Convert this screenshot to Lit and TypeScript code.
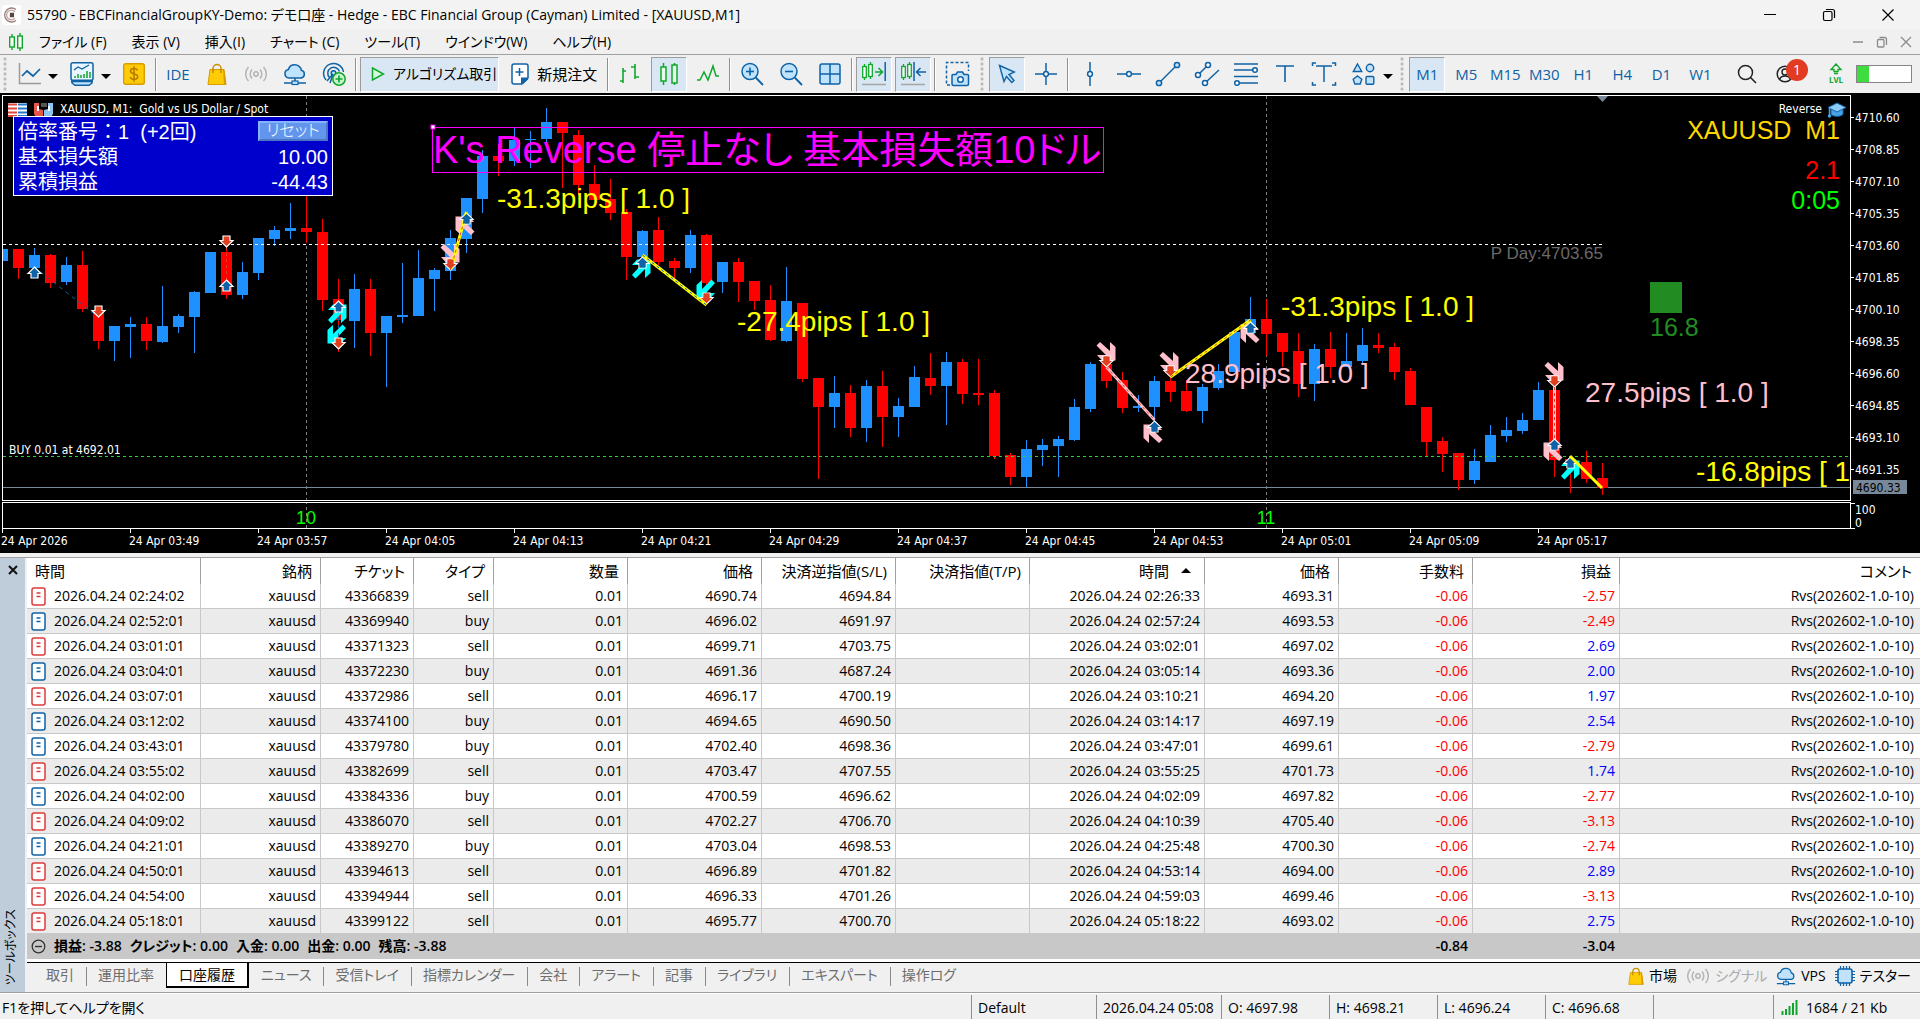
import { LitElement, html, svg, css, nothing } from "lit";
import { customElement } from "lit/decorators.js";
import { classMap } from "lit/directives/class-map.js";

const BLUE = "#0f62a5";
const PALE = "#bfe3fc";
const GREEN = "#0fa82c";

const icon = (w: number, h: number, body: unknown) =>
  html`<svg class="icon" width=${w} height=${h} viewBox="0 0 ${w} ${h}" fill="none" aria-hidden="true">${body}</svg>`;

const bag = (w: number, h: number) => html`<svg class="icon" width=${w} height=${h} viewBox="0 0 20 22" fill="none" aria-hidden="true">
  <path d="M6 9V5.500a4 4 0 0 1 8 0V9" stroke="#c98f00" stroke-width="1.500"/><path d="M3 6.500h14l2 15H1z" fill="#ffcb05" stroke="#d89b00"/><path d="M16 6.500h1.200l2 15H17z" fill="#d89b00"/><path d="M6 10V6M14 10V6" stroke="#b98200" stroke-width="1.300"/></svg>`;
const signal = html`<svg class="icon" width="24" height="20" viewBox="0 0 24 20" fill="none" stroke="#b4b4b4" stroke-width="1.500" aria-hidden="true">
  <circle cx="12" cy="10" r="2.200"/><path d="M8 5.500a6.500 6.500 0 0 0 0 9M16 5.500a6.500 6.500 0 0 1 0 9M4.500 3a10 10 0 0 0 0 14M19.500 3a10 10 0 0 1 0 14"/></svg>`;
const cloud = (s: number) => html`<svg class="icon" width=${s} height=${s} viewBox="0 0 24 24" fill="none" aria-hidden="true">
  <path d="M6 16a4.300 4.300 0 0 1-.6-8.500C6.200 4.500 8.700 2.700 11.700 2.700c3.400 0 6.300 2.400 6.700 5.600A4 4 0 0 1 18.500 16z" fill=${PALE} stroke=${BLUE} stroke-width="1.500"/><path d="M12 16v3M1 21h8M15 21h8" stroke=${BLUE} stroke-width="1.500"/><rect x="9" y="19" width="6" height="3.500" fill=${PALE} stroke=${BLUE} stroke-width="1.200"/></svg>`;

const lens = (plus: boolean) => icon(24, 24, svg`<circle cx="10" cy="9.500" r="8" fill=${PALE} stroke=${BLUE} stroke-width="1.500"/><path d="M15.700 15.500 23 23" stroke=${BLUE} stroke-width="1.800"/><path d="M6 9.500h8" stroke=${BLUE} stroke-width="1.600"/>${plus ? svg`<path d="M10 5.500v8" stroke=${BLUE} stroke-width="1.600"/>` : nothing}`);

const miniCandles = svg`<g stroke=${GREEN} stroke-width="1.300" fill="#fff"><path d="M3.500 2v16M9.500 0v17"/><rect x="1.700" y="4.500" width="3.600" height="11"/><rect x="7.700" y="2.500" width="3.600" height="12"/></g>`;

const ICONS: Record<string, unknown> = {
  lineChart: icon(24, 24, svg`<path d="M2.500 1v20.500H24" stroke="#9a9a9a" stroke-width="1.500"/><path d="M5 14l5-5 6 5 7-7" stroke=${BLUE} stroke-width="1.700"/>`),
  template: icon(24, 24, svg`<path d="M2 16v5l3 2.300h14l3-2.300v-5" fill=${PALE} stroke=${BLUE} stroke-width="1.500"/><rect x="1" y=".8" width="22" height="17.500" rx="2" fill="#eaf6ff" stroke=${BLUE} stroke-width="1.500"/><path d="M1 19.500h22" stroke=${BLUE} stroke-width="1.500"/><path d="M4 8l4-3 4 2 7-4" stroke=${BLUE} stroke-width="1.300"/><path d="M5 16v-2M8 16v-4M11 16v-3M14 16v-4M17 16v-7M20 16v-6" stroke=${GREEN} stroke-width="1.500"/>`),
  dollar: icon(22, 22, svg`<rect x=".7" y=".7" width="20.600" height="20.600" rx="2" fill="#ffcb05" stroke="#d89b00" stroke-width="1.400"/><path d="M14.500 7.500C14 6 12.800 5.500 11 5.500c-2 0-3.500.9-3.500 2.600 0 3.800 7.200 1.800 7.200 5.500 0 1.800-1.500 2.800-3.700 2.800-2 0-3.400-.8-3.800-2.500M11 3.300v15.400" stroke="#b57b00" stroke-width="1.500"/>`),
  bag: bag(20, 22),
  signal,
  cloud: cloud(24),
  globe: icon(24, 24, svg`<g stroke=${BLUE} stroke-width="1.500"><path d="M4 18A10 10 0 1 1 21.500 10"/><path d="M7.500 15.500A6 6 0 1 1 17.500 9.500" /><circle cx="11.500" cy="11" r="2.300" fill=${PALE}/><path d="M5 19l6-7M8 21l3-8"/></g><circle cx="17" cy="17" r="6.200" fill="#c9f3cf" stroke=${GREEN} stroke-width="1.500"/><path d="M17 13.500v7M13.500 17h7" stroke=${GREEN} stroke-width="1.700"/>`),
  play: icon(14, 14, svg`<path d="M1.500 1 12.500 7 1.500 13z" fill="#d8f7dc" stroke=${GREEN} stroke-width="1.500"/>`),
  order: icon(18, 22, svg`<path d="M3 1h12a2 2 0 0 1 2 2v12l-6 6H3a2 2 0 0 1-2-2V3a2 2 0 0 1 2-2z" fill="#fff" stroke=${BLUE} stroke-width="1.500"/><path d="M17 14.500v2L12 21h-2v-6.500z" fill=${BLUE}/><path d="M8.500 5v8M4.500 9h8" stroke=${BLUE} stroke-width="1.500"/>`),
  bars: icon(24, 24, svg`<path d="M5 6v15M5 9h3M2 19h3M17 2v15M17 15h4M13 5h4" stroke=${GREEN} stroke-width="1.600"/>`),
  candles: icon(20, 24, svg`<path d="M4.500 1v22M15.500 1v22" stroke=${GREEN} stroke-width="1.500"/><rect x="2" y="5" width="5" height="14" fill="#e8fbe9" stroke=${GREEN} stroke-width="1.500"/><rect x="13" y="3" width="5" height="18" fill="#e8fbe9" stroke=${GREEN} stroke-width="1.500"/>`),
  line: icon(24, 20, svg`<path d="M1 16h3l4-8 4 8 5-14 3 10h3" stroke=${GREEN} stroke-width="1.500"/>`),
  zoomIn: lens(true),
  zoomOut: lens(false),
  tiles: icon(22, 22, svg`<rect x="1" y="1" width="20" height="20" rx="2" fill=${PALE} stroke=${BLUE} stroke-width="1.500"/><path d="M11 1v20M1 11h20" stroke=${BLUE} stroke-width="1.500"/>`),
  shift: icon(26, 24, svg`${miniCandles}<path d="M14 10h7M17.500 6l4 4-4 4" stroke=${GREEN} stroke-width="1.500"/><path d="M24.200 0v19" stroke=${BLUE} stroke-width="1.500"/><path d="M1 22.500h24" stroke="#a5a5a5" stroke-width="1.500"/>`),
  scroll: icon(26, 24, svg`${miniCandles}<path d="M14 0v19M17 10h9M20.500 6l-4 4 4 4" stroke=${BLUE} stroke-width="1.500"/><path d="M1 22.500h24" stroke="#a5a5a5" stroke-width="1.500"/>`),
  camera: icon(26, 26, svg`<path d="M6 24H2.500V1.500h22V10" stroke=${BLUE} stroke-width="1.500" stroke-dasharray="3 2"/><path d="M9 13.500h3l1.500-2.500h5l1.500 2.500h3.500a1 1 0 0 1 1 1V23a1.500 1.500 0 0 1-1.500 1.500H9.500A1.500 1.500 0 0 1 8 23v-8.500a1 1 0 0 1 1-1z" fill=${PALE} stroke=${BLUE} stroke-width="1.500"/><circle cx="16.500" cy="18.500" r="2.800" fill="#fff" stroke=${BLUE} stroke-width="1.500"/>`),
  cursor: icon(18, 20, svg`<path d="M1.500 1.500 16.500 8l-5.500 2.500 5 6-2.200 2-5.300-6L6 17.500z" fill=${PALE} stroke=${BLUE} stroke-width="1.400"/>`),
  cross: icon(24, 24, svg`<g stroke=${BLUE} stroke-width="1.500"><path d="M12 1v22M1 12h22"/><circle cx="12" cy="12" r="2.400" fill="#fff"/></g>`),
  vline: icon(24, 24, svg`<g stroke=${BLUE} stroke-width="1.500"><path d="M12 0v24"/><circle cx="12" cy="12" r="2.400" fill="#fff"/></g>`),
  hline: icon(24, 24, svg`<g stroke=${BLUE} stroke-width="1.500"><path d="M0 12h24"/><circle cx="12" cy="12" r="2.400" fill="#fff"/></g>`),
  trend: icon(26, 26, svg`<g stroke=${BLUE} stroke-width="1.500"><path d="M4 22 22 4"/><circle cx="4" cy="22" r="2.600" fill=${PALE}/><circle cx="22" cy="4" r="2.600" fill=${PALE}/></g>`),
  channel: icon(26, 26, svg`<g stroke=${BLUE} stroke-width="1.500"><path d="M4 14 14 4M11 22 25 9"/><circle cx="4" cy="14" r="2.500" fill="#fff"/><circle cx="14" cy="4" r="2.500" fill="#fff"/><circle cx="11" cy="22" r="2.500" fill="#fff"/></g>`),
  fib: icon(26, 26, svg`<g stroke=${BLUE} stroke-width="1.500"><path d="M1 3h24M1 9h20M1 15.500h24M4 22h21"/><circle cx="22" cy="9" r="2.300" fill="#fff"/><circle cx="4" cy="22" r="2.300" fill="#fff"/></g>`),
  text: icon(24, 24, svg`<path d="M3 4h18M12 4v16" stroke=${BLUE} stroke-width="1.600"/>`),
  label: icon(26, 26, svg`<path d="M5 5h16M13 5v16M1.500 5V2H5M21 2h3.500v3M24.500 21v3H21M5 24H1.500v-3" stroke=${BLUE} stroke-width="1.500"/>`),
  shapes: icon(24, 24, svg`<g stroke=${BLUE} stroke-width="1.400" fill=${PALE}><path d="M5.500 2 9.700 9.500H1.300z"/><circle cx="18" cy="6" r="3.700"/><path d="M5.500 14l4.300 3.300L8.200 22H2.800l-1.600-4.700z"/><rect x="14" y="14.500" width="7.800" height="7.800" rx="1"/></g>`),
  search: icon(20, 20, svg`<circle cx="8.500" cy="8.500" r="7" stroke="#222" stroke-width="1.500"/><path d="M13.500 13.500 19 19" stroke="#222" stroke-width="1.600"/>`),
  account: icon(18, 18, svg`<circle cx="9" cy="9" r="7.800" stroke="#222" stroke-width="1.500"/><circle cx="9" cy="7" r="3" stroke="#222" stroke-width="1.400"/><path d="M3.500 14.500c1-3 3-3.500 5.500-3.500s4.500.5 5.500 3.500" stroke="#222" stroke-width="1.400"/>`),
};

interface Tool { icon?: string; text?: string; label?: string; on?: boolean; drop?: boolean; kind?: "sep" | "grip"; }
const SEP: Tool = { kind: "sep" };
const GRIP: Tool = { kind: "grip" };
const TOOLS: Tool[] = [
  { icon: "lineChart", label: "チャートタイプ", drop: true }, { icon: "template", label: "テンプレート", drop: true }, { icon: "dollar", label: "銘柄" }, SEP,
  { text: "IDE" }, { icon: "bag", label: "市場" }, { icon: "signal", label: "シグナル" }, { icon: "cloud", label: "VPS" }, { icon: "globe", label: "コミュニティ" }, SEP,
  { icon: "play", text: "アルゴリズム取引", on: true }, { icon: "order", text: "新規注文" }, SEP,
  { icon: "bars", label: "バーチャート" }, { icon: "candles", label: "ローソク足", on: true }, { icon: "line", label: "ラインチャート" }, SEP,
  { icon: "zoomIn", label: "ズームイン" }, { icon: "zoomOut", label: "ズームアウト" }, { icon: "tiles", label: "タイル表示" }, SEP,
  { icon: "shift", label: "チャートシフト", on: true }, { icon: "scroll", label: "自動スクロール", on: true }, SEP,
  { icon: "camera", label: "スクリーンショット" }, GRIP,
  { icon: "cursor", label: "カーソル", on: true }, { icon: "cross", label: "クロスヘア" }, SEP,
  { icon: "vline", label: "垂直線" }, { icon: "hline", label: "水平線" }, { icon: "trend", label: "トレンドライン" }, { icon: "channel", label: "チャネル" },
  { icon: "fib", label: "フィボナッチ" }, { icon: "text", label: "テキスト" }, { icon: "label", label: "ラベル" }, { icon: "shapes", label: "オブジェクト", drop: true }, GRIP,
  ...["M1", "M5", "M15", "M30", "H1", "H4", "D1", "W1"].map((t, i) => ({ text: t, on: i === 0 })),
];

// One entry per minute: direction, high, body top, body bottom, low (vertical canvas positions).
type Candle = [string, number, number, number, number];
const CANDLES: Candle[] = [
  ["B", 249, 249, 261, 261], ["R", 249, 249, 268, 279], ["B", 248, 255, 268, 268], ["R", 254, 255, 283, 288], ["B", 257, 265, 282, 285],
  ["R", 251, 265, 309, 312], ["R", 311, 311, 341, 349], ["B", 326, 326, 341, 361], ["B", 317, 324, 327, 358], ["R", 317, 324, 341, 350],
  ["B", 286, 326, 342, 343], ["B", 314, 316, 327, 333], ["B", 291, 292, 317, 353], ["B", 252, 252, 293, 293], ["R", 246, 252, 295, 299],
  ["B", 262, 272, 295, 299], ["B", 238, 238, 273, 280], ["B", 226, 230, 239, 246], ["B", 203, 228, 231, 239], ["R", 180, 228, 232, 243],
  ["R", 219, 232, 300, 311], ["R", 279, 299, 320, 352], ["B", 274, 289, 321, 348], ["R", 279, 289, 333, 356], ["B", 316, 316, 333, 387],
  ["B", 263, 315, 317, 323], ["B", 250, 278, 316, 316], ["B", 268, 270, 279, 311], ["B", 230, 238, 271, 280], ["B", 198, 198, 239, 253],
  ["B", 150, 156, 199, 213], ["R", 144, 156, 161, 176], ["B", 128, 140, 161, 166], ["B", 131, 139, 140, 168], ["B", 108, 122, 139, 145],
  ["R", 122, 122, 133, 188], ["R", 130, 135, 185, 195], ["R", 165, 184, 200, 200], ["R", 179, 199, 213, 220], ["R", 209, 212, 257, 280],
  ["B", 230, 231, 257, 257], ["R", 217, 230, 262, 265], ["R", 258, 261, 268, 279], ["B", 230, 235, 268, 273], ["R", 234, 235, 283, 290],
  ["B", 262, 262, 282, 293], ["R", 258, 262, 282, 302], ["R", 281, 281, 301, 310], ["R", 285, 300, 340, 341], ["B", 267, 301, 341, 342],
  ["R", 303, 303, 379, 382], ["R", 378, 378, 407, 479], ["B", 376, 393, 407, 428], ["R", 385, 393, 428, 437], ["B", 380, 386, 428, 442],
  ["R", 371, 386, 417, 447], ["B", 398, 406, 417, 437], ["B", 366, 377, 407, 407], ["R", 353, 378, 386, 395], ["B", 352, 362, 386, 425],
  ["R", 359, 362, 394, 404], ["R", 359, 393, 395, 405], ["R", 390, 393, 456, 459], ["R", 453, 455, 477, 485], ["B", 440, 449, 477, 487],
  ["B", 439, 445, 450, 466], ["B", 436, 439, 446, 477], ["B", 399, 407, 440, 441], ["B", 362, 364, 409, 412], ["R", 364, 364, 381, 388],
  ["R", 372, 380, 408, 413], ["B", 395, 406, 408, 412], ["B", 376, 381, 407, 425], ["R", 377, 381, 392, 402], ["R", 380, 391, 411, 412],
  ["B", 384, 387, 411, 423], ["B", 364, 371, 388, 390], ["B", 332, 332, 372, 372], ["B", 297, 319, 333, 333], ["R", 299, 319, 334, 356],
  ["R", 333, 333, 352, 367], ["R", 333, 351, 384, 397], ["B", 344, 349, 384, 401], ["R", 332, 349, 367, 378], ["B", 333, 361, 367, 367],
  ["B", 328, 345, 361, 365], ["R", 333, 345, 348, 353], ["R", 343, 347, 372, 380], ["R", 368, 371, 405, 405], ["R", 407, 407, 442, 456],
  ["R", 437, 441, 454, 472], ["R", 453, 453, 480, 490], ["B", 449, 461, 480, 484], ["B", 425, 435, 462, 462], ["B", 417, 430, 436, 442],
  ["B", 413, 420, 431, 434], ["B", 382, 390, 420, 420], ["R", 387, 390, 460, 477], ["R", 457, 459, 465, 493], ["R", 451, 462, 479, 483],
  ["R", 463, 478, 488, 495],
];

const UPS = [[34, 267], [226, 280], [338, 301], [466, 213], [642, 257], [1154, 421], [1250, 322], [1554, 439], [1570, 457]];
const DOWNS = [[98, 317], [226, 247], [338, 349], [450, 270], [706, 304], [1106, 367], [1170, 377], [1554, 387]];
const HEADS: [number, number, number, string][] = [
  [441, 244, 0, "pink"], [1097, 342, 0, "pink"], [1160, 352, 0, "pink"], [1545, 362, 0, "pink"],
  [456, 217, 180, "pink"], [1144, 425, 180, "pink"], [1241, 325, 180, "pink"], [1544, 443, 180, "pink"],
  [328, 305, -90, "cyan"], [632, 260, -90, "cyan"], [1561, 461, -90, "cyan"],
  [328, 325, 90, "cyan"], [697, 280, 90, "cyan"],
];
const TRADES: [number, number, number, number, string, string][] = [
  [450, 270, 466, 212, "yellow", "#e0401f"], [642, 255, 706, 305, "yellow", BLUE], [1106, 367, 1154, 420, "pink", "#e0401f"],
  [1170, 377, 1250, 320, "yellow", "#e0401f"], [1554, 387, 1554, 439, "pink", "#e0401f"],
];
const PIPS: [number, number, string, string][] = [
  [497, 208, "yellow", "-31.3pips [ 1.0 ]"], [737, 331, "yellow", "-27.4pips [ 1.0 ]"], [1185, 383, "pink", "28.9pips [ 1.0 ]"],
  [1281, 316, "yellow", "-31.3pips [ 1.0 ]"], [1585, 402, "pink", "27.5pips [ 1.0 ]"], [1696, 481, "yellow", "-16.8pips [ 1"],
];
const TIMES = ["2026", "03:49", "03:57", "04:05", "04:13", "04:21", "04:29", "04:37", "04:45", "04:53", "05:01", "05:09", "05:17"];
const PRICES = ["4710.60", "4708.85", "4707.10", "4705.35", "4703.60", "4701.85", "4700.10", "4698.35", "4696.60", "4694.85", "4693.10", "4691.35"];

const HEAD = ["時間", "銘柄", "チケット", "タイプ", "数量", "価格", "決済逆指値(S/L)", "決済指値(T/P)", "時間", "価格", "手数料", "損益", "コメント"];
// open time, ticket, side, open price, stop loss, close time, close price, profit
const DEALS = `02:24:02 43366839 sell 4690.74 4694.84 02:26:33 4693.31 -2.57
02:52:01 43369940 buy 4696.02 4691.97 02:57:24 4693.53 -2.49
03:01:01 43371323 sell 4699.71 4703.75 03:02:01 4697.02 2.69
03:04:01 43372230 buy 4691.36 4687.24 03:05:14 4693.36 2.00
03:07:01 43372986 sell 4696.17 4700.19 03:10:21 4694.20 1.97
03:12:02 43374100 buy 4694.65 4690.50 03:14:17 4697.19 2.54
03:43:01 43379780 buy 4702.40 4698.36 03:47:01 4699.61 -2.79
03:55:02 43382699 sell 4703.47 4707.55 03:55:25 4701.73 1.74
04:02:00 43384336 buy 4700.59 4696.62 04:02:09 4697.82 -2.77
04:09:02 43386070 sell 4702.27 4706.70 04:10:39 4705.40 -3.13
04:21:01 43389270 buy 4703.04 4698.53 04:25:48 4700.30 -2.74
04:50:01 43394613 sell 4696.89 4701.82 04:53:14 4694.00 2.89
04:54:00 43394944 sell 4696.33 4701.26 04:59:03 4699.46 -3.13
05:18:01 43399122 sell 4695.77 4700.70 05:18:22 4693.02 2.75`.split("\n").map((l) => l.split(" "));

const TABS = ["取引", "運用比率", "口座履歴", "ニュース", "受信トレイ", "指標カレンダー", "会社", "アラート", "記事", "ライブラリ", "エキスパート", "操作ログ"];
const MENUS = ["ファイル (F)", "表示 (V)", "挿入(I)", "チャート (C)", "ツール(T)", "ウインドウ(W)", "ヘルプ(H)"];

const base = css`
  * { box-sizing: border-box; }
  :host { display: block; font-family: "Open Sans", "Noto Sans CJK JP", sans-serif; font-size: 14px; line-height: 20px; color: #000; font-feature-settings: "palt"; }
  button { font: inherit; font-feature-settings: inherit; color: inherit; background: none; border: 0; padding: 0; margin: 0; white-space: nowrap; }
  .icon { display: block; flex: none; }
`;

@customElement("app-header")
class AppHeader extends LitElement {
  static styles = [base, css`
    .title { display: flex; align-items: center; height: 29px; background: #f3f3f3; padding: 0 3px 0 2px; }
    .name { margin-left: 6px; flex: 1; white-space: nowrap; line-height: 24px; }
    .win { display: flex; }
    .win button { width: 59px; height: 29px; display: grid; place-items: center; }
    .menu { display: flex; align-items: center; height: 26px; background: #f0f0f0; border-bottom: 1px solid #a0a0a0; padding: 0 2px 0 8px; }
    .items { display: flex; gap: 25px; margin-left: 15px; flex: 1; }
    .mdi { display: flex; color: #8c8c8c; }
    .mdi button { width: 24px; height: 20px; display: grid; place-items: center; }
    .bar { display: flex; align-items: center; gap: 3px; height: 38px; background: #f0f0f0; padding: 0 8px 0 2px; }
    .grip { width: 8px; height: 34px; flex: none; background: radial-gradient(circle, #b8b8b8 1px, transparent 2px) center / 4px 5px repeat-y; }
    .grip.first { width: 5px; }
    .sep { width: 2px; height: 33px; flex: none; background: #8f8f8f; border-right: 1px solid #fff; }
    .tool { height: 35px; min-width: 36px; display: flex; align-items: center; justify-content: center; flex: none; border: 1px solid transparent; color: #0f62a5; font-size: 15px; }
    .tool.wide { color: #000; gap: 8px; padding: 0 1px 0 10px; font-size: 14px; }
    .tool.order { gap: 8px; padding: 0 6px 0 8px; font-size: 15px; }
    .tool.drop { width: 50px; gap: 7px; padding-left: 5px; }
    .tool.on { background: #d9e6f3; border-color: #9c9c9c #fff #fff #9c9c9c; }
    .caret { width: 0; border: 5px solid transparent; border-top: 5px solid #000; border-bottom: 0; margin-top: 4px; flex: none; }
    .right { margin-left: auto; display: flex; align-items: center; flex: none; }
    .plain { width: 38px; height: 35px; display: grid; place-items: center; position: relative; }
    .badge { position: absolute; left: 20px; top: 2px; width: 22px; height: 22px; border-radius: 50%; background: #e23b22; color: #fff; font-size: 14px; line-height: 21px; text-align: center; }
    .lvl { display: grid; justify-items: center; width: 20px; margin: 0 10px 0 22px; color: #0fa82c; font: 700 8px/10px "Open Sans", sans-serif; }
    .level { width: 56px; height: 18px; background: #fff; border: 1px solid #858585; }
    .fill { height: 100%; background: #3fdc3f; }
  `];

  private tool(t: Tool) {
    if (t.kind === "sep") return html`<span class="sep"></span>`;
    if (t.kind === "grip") return html`<span class="grip"></span>`;
    const wide = !!(t.icon && t.text);
    return html`<button class=${classMap({ tool: true, on: !!t.on, wide, order: t.icon === "order", drop: !!t.drop })} aria-label=${t.label ?? nothing}>
      ${t.icon ? ICONS[t.icon] : nothing}${t.text ?? nothing}${t.drop ? html`<span class="caret"></span>` : nothing}</button>`;
  }

  render() {
    return html`
      <header class="title">
        ${icon(19, 20, svg`<rect width="19" height="20" rx="3" fill="#fff"/><g stroke="#9b7f7c" stroke-width="1.300"><path d="M14 4.500A7 7 0 1 0 14 15.500"/><path d="M13 6.800A4.800 4.800 0 1 0 13 13.200" stroke="#c0a6a2"/><path d="M12 8.500H8.500v3H12M8.500 10H12" stroke="#5d4644"/></g>`)}
        <span class="name">55790 - EBCFinancialGroupKY-Demo: デモ口座 - Hedge - EBC Financial Group (Cayman) Limited - [XAUUSD,M1]</span>
        <div class="win">
          <button aria-label="最小化">${icon(14, 14, svg`<path d="M1 6.500h12" stroke="#000"/>`)}</button>
          <button aria-label="元に戻す">${icon(14, 14, svg`<rect x="1.500" y="3.500" width="8.500" height="9" rx="1.500" stroke="#000" stroke-width="1.200"/><path d="M4 1.500h6.500a2 2 0 0 1 2 2V10" stroke="#000" stroke-width="1.200"/>`)}</button>
          <button aria-label="閉じる">${icon(14, 14, svg`<path d="M1.500 1.500l11 11M12.500 1.500l-11 11" stroke="#000" stroke-width="1.200"/>`)}</button>
        </div>
      </header>
      <nav class="menu">
        ${icon(16, 18, svg`<g stroke=${GREEN} stroke-width="1.400" fill="#fff"><path d="M4 1v16M12 0v18"/><rect x="1.700" y="4" width="4.600" height="10"/><rect x="9.700" y="3" width="4.600" height="12"/></g>`)}
        <div class="items">${MENUS.map((m) => html`<button>${m}</button>`)}</div>
        <div class="mdi">
          <button aria-label="チャートを最小化">${icon(12, 12, svg`<path d="M1 6h10" stroke="currentColor" stroke-width="1.500"/>`)}</button>
          <button aria-label="チャートを元に戻す">${icon(12, 12, svg`<rect x="1.500" y="3.500" width="6.500" height="7.500" rx="1" stroke="currentColor" stroke-width="1.300"/><path d="M3.500 1.500h5a2 2 0 0 1 2 2V9" stroke="currentColor" stroke-width="1.300"/>`)}</button>
          <button aria-label="チャートを閉じる">${icon(12, 12, svg`<path d="M1 1l10 10M11 1 1 11" stroke="currentColor" stroke-width="1.300"/>`)}</button>
        </div>
      </nav>
      <div class="bar" role="toolbar">
        <span class="grip first"></span>
        ${TOOLS.map((t) => this.tool(t))}
        <div class="right">
          <button class="plain" aria-label="検索">${ICONS.search}</button>
          <button class="plain" aria-label="アカウント">${ICONS.account}<span class="badge">1</span></button>
          <span class="lvl">${icon(14, 12, svg`<path d="M7 1 12 6.500H9V8.500H5V6.500H2zM5 10.500h4" stroke=${GREEN} stroke-width="1.300"/>`)}LVL</span>
          <div class="level" role="meter" aria-label="接続レベル" aria-valuemin="0" aria-valuemax="100" aria-valuenow="22"><div class="fill" style="width:22%"></div></div>
        </div>
      </div>`;
  }
}

@customElement("price-chart")
class PriceChart extends LitElement {
  static styles = [base, css`
    .chart { display: grid; grid-template-columns: minmax(0, 1fr) 69px; grid-template-rows: 406px 28px 24px; background: #000; padding: 2px 0 0 2px; }
    .frame { border: 1px solid #fff; position: relative; overflow: hidden; }
    .sub { margin-top: 1px; }
    .canvas { display: block; width: 100%; height: 100%; overflow: hidden; }
    .axis { display: block; width: 100%; height: 100%; overflow: visible; }
    .side { grid-column: 2; grid-row: 1 / 4; }
    .small { font: 12px "DejaVu Sans Condensed", "DejaVu Sans", sans-serif; fill: #fff; }
    .dark { fill: #000; }
    .arial { font-family: "Liberation Sans", "Noto Sans CJK JP", sans-serif; }
    .crisp { shape-rendering: crispEdges; }
    .caption { position: absolute; left: 5px; top: 6px; display: flex; align-items: center; gap: 7px; height: 15px; color: #fff; font: 12px/15px "DejaVu Sans Condensed", sans-serif; }
    .symbol { white-space: pre; }
    .panel { position: absolute; left: 10px; top: 20px; width: 320px; height: 80px; padding: 3px 4px 0 4px; background: #0000cd; border: 1px solid #fff; color: #fff; font: 20px/25px "Liberation Sans", "Noto Sans CJK JP", sans-serif; font-feature-settings: normal; }
    .row { display: flex; justify-content: space-between; height: 25px; }
    .key { white-space: pre; }
    .reset { width: 70px; height: 20px; margin-top: 1px; background: #6495ed; border: 2px solid; border-color: #84b4ff #4a76c4 #4a76c4 #84b4ff; font: 300 16px/16px "Liberation Sans", "Noto Sans CJK JP", sans-serif; font-feature-settings: "palt"; }
    .info { position: absolute; right: 10px; top: 5px; text-align: right; color: #ffd700; font: 25px/24px "Liberation Sans", sans-serif; }
    .expert { display: flex; justify-content: flex-end; align-items: center; gap: 5px; height: 17px; margin-right: -6px; color: #fff; font: 12px/17px "DejaVu Sans Condensed", sans-serif; }
    .spread { color: #f00; margin-top: 16px; }
    .clock { color: #0f0; margin-top: 6px; }
  `];

  render() {
    const x = (i: number) => 2 + i * 16;
    return html`<section class="chart">
      <div class="frame">
        <svg class="canvas" aria-label="XAUUSD M1"><g transform="translate(-3 -96)">
          <g class="crisp">
            <path d="M306.500 96V501M1266.500 96V501" stroke="#808080" stroke-dasharray="3 3"/>
            <path d="M3 487.500H1850" stroke="#778899"/>
            ${CANDLES.map(([d, hi, t, b, lo], i) => svg`<g fill=${d === "B" ? "#1e90ff" : "#f00"}><rect x=${x(i)} y=${hi} width="1" height=${lo - hi}></rect><rect x=${x(i) - 5} y=${t} width="11" height=${b - t}></rect></g>`)}
            <path d="M3 244.500H1602" stroke="#fff" stroke-dasharray="3 3"/>
            <path d="M3 456.500H1850" stroke="#32cd32" stroke-dasharray="3 3"/>
            <rect x="1650" y="282" width="32" height="31" fill="#228b22"/>
          </g>
          <path d="M1597 96h11l-5.500 6z" fill="#778899"/>
          ${HEADS.map(([hx, hy, r, c]) => svg`<path transform="translate(${hx} ${hy}) rotate(${r} 9 9)" fill=${c} d="M3 0-.5 3.500 9 13H0L5 18.500H18.500V5L13 0V9z"></path>`)}
          <path d="M34 267 98 317M338.500 301V349" stroke=${BLUE} stroke-dasharray="4 4"/>
          <path d="M226.500 247V280" stroke="#e0401f" stroke-dasharray="3 3"/>
          ${UPS.map(([ux, uy]) => svg`<path transform="translate(${ux + 0.5} ${uy})" d="M0 0 6.500 6.500H3.500V11H-3.500V6.500H-6.500z" fill=${BLUE} stroke="#fff" stroke-width="1.200"></path>`)}
          ${DOWNS.map(([ux, uy]) => svg`<path transform="translate(${ux + 0.5} ${uy})" d="M0 0 6.500-6.500H3.500V-11H-3.500V-6.500H-6.500z" fill="#e0401f" stroke="#fff" stroke-width="1.200"></path>`)}
          ${TRADES.map(([a, b, c, d, s, inner]) => svg`<path d="M${a + 0.5} ${b}L${c + 0.5} ${d}" stroke=${s} stroke-width="3"></path><path d="M${a + 0.5} ${b}L${c + 0.5} ${d}" stroke=${inner} stroke-dasharray="3 3"></path>`)}
          ${UPS.slice(3).map(([ux, uy]) => svg`<path transform="translate(${ux + 0.5} ${uy})" d="M0 1 5.500 6H3V10.500H-3V6H-5.500z" fill=${BLUE}></path>`)}
          ${DOWNS.slice(3).map(([ux, uy]) => svg`<path transform="translate(${ux + 0.5} ${uy})" d="M0-1 5.500-6H3V-10.500H-3V-6H-5.500z" fill="#e0401f"></path>`)}
          <path d="M1570 456 1602 488" stroke="yellow" stroke-width="3"/>
          <rect x="432.500" y="127.500" width="671" height="45" fill="none" stroke="#f0f"/>
          <rect x="431" y="125" width="4" height="4" fill="#fff" stroke="#f0f"/>
          <text class="small" x="9" y="454">BUY 0.01 at 4692.01</text>
          <g class="arial">
            <text x="433" y="163" font-size="38" fill="#f0f">K's Reverse 停止なし 基本損失額10ドル</text>
            ${PIPS.map(([px, py, c, t]) => svg`<text x=${px} y=${py} font-size="28" fill=${c}>${t}</text>`)}
            <text x="1603" y="259" font-size="17" fill="#696969" text-anchor="end">P Day:4703.65</text>
            <text x="1650" y="336" font-size="25" fill="#228b22">16.8</text>
          </g>
        </g></svg>
        <div class="caption">
          ${icon(19, 14, svg`<rect width="19" height="14" rx="1" fill="#fff"/><path d="M0 1.500h9M0 5.500h9M0 9.500h9M0 13h9" stroke="#e0483c" stroke-width="2"/><path d="M10 1.500h9M10 5.500h9M10 9.500h9M10 13h9" stroke="#1f79c8" stroke-width="2"/>`)}
          ${icon(19, 14, svg`<path d="M0 0h5v6l4 1v7H2L0 11z" fill="#e8564a"/><path d="M3 3h2v5H3z" fill="#fff"/><path d="M19 0h-5v6l-4 1v7h7l2-3z" fill="#8cc4f2"/><path d="M14 3h2v5h-2z" fill="#fff"/><path d="M7 0h6v4H7z" fill="#555"/>`)}
          <span class="symbol">XAUUSD, M1:  Gold vs US Dollar / Spot</span>
        </div>
        <div class="panel">
          <div class="row"><span class="key">倍率番号：1  (+2回)</span><button class="reset">リセット</button></div>
          <div class="row"><span class="key">基本損失額</span><span>10.00</span></div>
          <div class="row"><span class="key">累積損益</span><span>-44.43</span></div>
        </div>
        <div class="info">
          <div class="expert">Reverse ${icon(19, 16, svg`<path d="M4 7v5.500c3 2.500 9 2.500 12 0V7" fill="#4aa3e6" stroke="#0f62a5"/><path d="M1 5.500 10 1l9 4.500-9 4.500z" fill="#8ccaf8" stroke="#0f62a5"/><path d="M2.500 6v8" stroke="#4aa3e6" stroke-width="1.500"/><circle cx="2.500" cy="14" r="1.700" fill="#4aa3e6"/>`)}</div>
          <div class="symbol">XAUUSD  M1</div>
          <div class="spread">2.1</div>
          <div class="clock">0:05</div>
        </div>
      </div>
      <div class="frame sub">
        <svg class="canvas"><g transform="translate(-3 -503)">
          <path class="crisp" d="M306.500 501V530M1266.500 501V530" stroke="#808080" stroke-dasharray="3 3"/>
          <g class="arial" font-size="18" fill="#0f0" text-anchor="middle"><text x="306" y="524">10</text><text x="1266" y="524">11</text></g>
        </g></svg>
      </div>
      <svg class="axis"><g transform="translate(-2 -529)">
        ${TIMES.map((t, i) => svg`<rect x=${2 + i * 128} y="529" width="1" height="4" fill="#fff"></rect><text class="small" x=${1 + i * 128} y="545">24 Apr ${t}</text>`)}
      </g></svg>
      <svg class="axis side"><g transform="translate(-1851 -95)">
        ${PRICES.map((p, i) => svg`<rect x="1851" y=${117 + i * 32} width="3" height="1" fill="#fff"></rect><text class="small" x="1855" y=${122 + i * 32}>${p}</text>`)}
        <rect x="1853" y="480" width="54" height="14" fill="#778899"/><text class="small dark" x="1856" y="492">4690.33</text>
        <path d="M1851 503.500h4M1851 528.500h4" stroke="#fff"/>
        <text class="small" x="1855" y="514">100</text><text class="small" x="1855" y="527">0</text>
      </g></svg>
    </section>`;
  }
}

@customElement("tool-box")
class ToolBox extends LitElement {
  static styles = [base, css`
    .wrap { display: grid; grid-template-columns: 25px minmax(0, 1fr); background: #f0f0f0; border-top: 4px solid #f0f0f0; }
    .strip { background: #bfcddb; border-top: 1px solid #a0a0a0; display: flex; flex-direction: column; justify-content: space-between; align-items: center; padding: 4px 4px 7px 0; }
    .close { width: 20px; height: 16px; margin-left: 4px; display: grid; place-items: center; }
    .side { writing-mode: vertical-rl; text-orientation: sideways; transform: rotate(180deg); font-size: 12px; }
    .main { border-top: 1px solid #a0a0a0; min-width: 0; }
    .sheet { margin-left: 2px; background: #fff; padding-bottom: 3px; border-bottom: 1px solid #000; }
    table { width: 100%; table-layout: fixed; border-collapse: separate; border-spacing: 0; }
    th, td { padding: 0 4px; text-align: right; white-space: nowrap; overflow: hidden; font-weight: 400; line-height: 20px; }
    th { height: 26px; font-size: 15px; padding: 0 8px; border-right: 1px solid #a0a0a0; }
    td { height: 25px; border-right: 1px solid #c8c8c8; border-bottom: 1px solid #c8c8c8; }
    th:first-child, td:first-child { text-align: left; }
    th:last-child, td:last-child { border-right: 0; }
    td:last-child { padding-right: 6px; }
    tbody tr:nth-child(even) { background: #ebebeb; }
    .when { display: flex; align-items: center; gap: 8px; }
    .loss { color: #f00; }
    .gain { color: #00f; }
    tfoot td { background: #c8c8c8; border-color: #c8c8c8; font-weight: 600; }
    .sum { display: flex; align-items: center; gap: 8px; }
    .arrow { display: inline-block; margin: 0 5px 4px 12px; border: 5px solid transparent; border-bottom: 5px solid #000; border-top: 0; }
    .foot { display: flex; justify-content: space-between; height: 29px; margin-left: 2px; }
    .tabs { display: flex; align-items: flex-start; padding-left: 7px; }
    .tab { height: 24px; padding: 0 12px; font-size: 14px; line-height: 24px; color: #6d6d6d; position: relative; }
    .tab + .tab::before { content: ""; position: absolute; left: 0; top: 4px; height: 19px; border-left: 1px solid #8a8a8a; }
    .tab.on { background: #fff; color: #000; border: 1px solid #000; border-width: 0 2px 2px 1px; height: 25px; }
    .tab.on::before, .tab.on + .tab::before { display: none; }
    .links { display: flex; align-items: center; gap: 9px; padding: 0 9px 4px 0; }
    .link { display: flex; align-items: center; gap: 5px; }
    .dim { color: #a9a9a9; }
    .status { display: flex; height: 27px; background: #f0f0f0; border-top: 1px solid #a0a0a0; box-shadow: inset 0 1px #fff; }
    .cell { border-left: 1px solid #8f8f8f; margin-top: 2px; padding: 3px 5px 0 6px; width: 108px; white-space: nowrap; line-height: 20px; }
    .cell.help { flex: 1; border: 0; padding-left: 2px; }
    .cell.mid { width: 125px; }
    .cell.gap { width: 120px; }
    .cell.net { width: 147px; display: flex; gap: 7px; padding-left: 7px; }
  `];

  private doc(side: string) {
    const c = side === "sell" ? "#dd3b3b" : BLUE;
    return icon(15, 19, svg`<rect x="1" y="1" width="13" height="17" rx="2" fill="#fff" stroke=${c} stroke-width="1.500"/><path d="M5.500 6h4M5.500 9.500h4" stroke=${c} stroke-width="1.300"/>`);
  }

  render() {
    const widths = [174, 120, 93, 80, 134, 134, 134, 134, 175, 134, 134, 147];
    const tone = (v: string) => (v.startsWith("-") ? "loss" : "gain");
    return html`
      <div class="wrap">
        <aside class="strip">
          <button class="close" aria-label="ツールボックスを閉じる">${icon(12, 12, svg`<path d="M2 2l8 8M10 2l-8 8" stroke="#111" stroke-width="2"/>`)}</button>
          <span class="side">ツールボックス</span>
        </aside>
        <div class="main">
          <div class="sheet">
            <table>
              <colgroup>${widths.map((w) => html`<col style="width:${w}px">`)}<col></colgroup>
              <thead><tr>${HEAD.map((h, i) => html`<th scope="col">${h}${i === 8 ? html`<span class="arrow"></span>` : nothing}</th>`)}</tr></thead>
              <tbody>${DEALS.map(([o, id, side, p, sl, c, cp, pl]) => html`<tr>
                <td><div class="when">${this.doc(side)}2026.04.24 ${o}</div></td><td>xauusd</td><td>${id}</td><td>${side}</td><td>0.01</td><td>${p}</td><td>${sl}</td><td></td>
                <td>2026.04.24 ${c}</td><td>${cp}</td><td class="loss">-0.06</td><td class=${tone(pl)}>${pl}</td><td>Rvs(202602-1.0-10)</td></tr>`)}</tbody>
              <tfoot><tr><td colspan="10"><div class="sum">${icon(15, 15, svg`<circle cx="7.500" cy="7.500" r="6.300" stroke="#333" stroke-width="1.300"/><path d="M4 7.500h7" stroke="#333" stroke-width="1.400"/>`)}<span>損益: -3.88</span><span>クレジット: 0.00</span><span>入金: 0.00</span><span>出金: 0.00</span><span>残高: -3.88</span></div></td><td>-0.84</td><td>-3.04</td><td></td></tr></tfoot>
            </table>
          </div>
          <div class="foot">
            <div class="tabs" role="tablist">${TABS.map((t, i) => html`<button role="tab" aria-selected=${i === 2} class=${classMap({ tab: true, on: i === 2 })}>${t}</button>`)}</div>
            <div class="links">
              <button class="link">${bag(16, 18)}市場</button>
              <button class="link dim">${signal}シグナル</button>
              <button class="link">${cloud(20)}VPS</button>
              <button class="link">${icon(20, 20, svg`<path d="M5.500 0v20M8.500 0v20M11.500 0v20M14.500 0v20M0 5.500h20M0 8.500h20M0 11.500h20M0 14.500h20" stroke=${BLUE} stroke-width="1.200"/><rect x="3" y="3" width="14" height="14" rx="2" fill=${PALE} stroke=${BLUE} stroke-width="1.600"/>`)}テスター</button>
            </div>
          </div>
        </div>
      </div>
      <footer class="status">
        <span class="cell help">F1を押してヘルプを開く</span>
        <span class="cell mid">Default</span><span class="cell mid">2026.04.24 05:08</span>
        <span class="cell">O: 4697.98</span><span class="cell">H: 4698.21</span><span class="cell">L: 4696.24</span><span class="cell">C: 4696.68</span>
        <span class="cell gap"></span>
        <span class="cell net">${icon(18, 18, svg`<path d="M1.500 17v-4M5 17v-6M8.500 17V8M12 17V5M15.500 17V2" stroke=${GREEN} stroke-width="2"/>`)}1684 / 21 Kb</span>
      </footer>`;
  }
}

@customElement("app-root")
class AppRoot extends LitElement {
  static styles = css`:host { display: block; min-width: 1280px; background: #f0f0f0; }`;
  render() {
    return html`<app-header></app-header><price-chart></price-chart><tool-box></tool-box>`;
  }
}
